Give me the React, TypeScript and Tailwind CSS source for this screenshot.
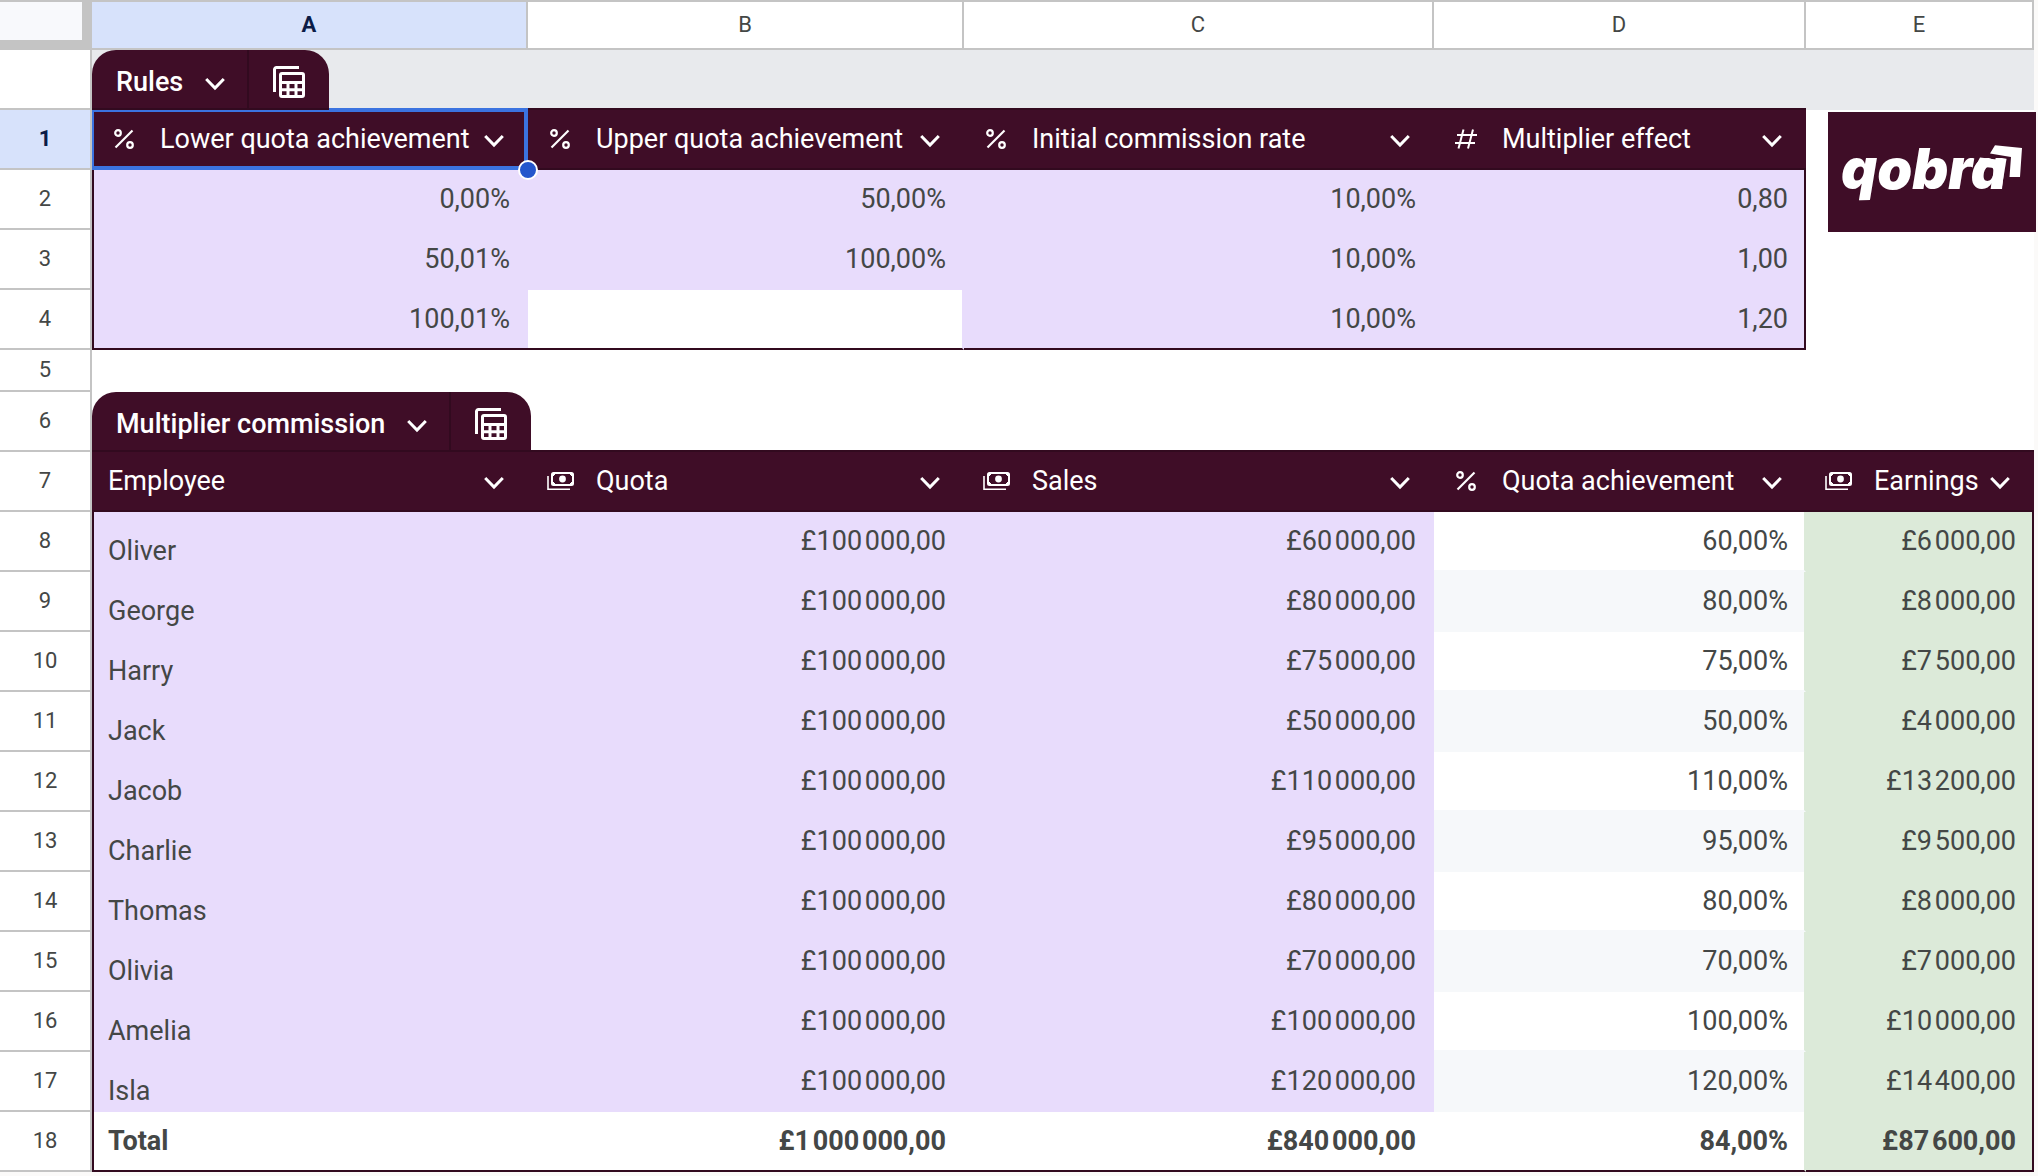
import React from "react";

const rules = [
  ["0,00%", "50,00%", "10,00%", "0,80"],
  ["50,01%", "100,00%", "10,00%", "1,00"],
  ["100,01%", "", "10,00%", "1,20"],
];

const employees = [
  ["Oliver", "£100 000,00", "£60 000,00", "60,00%", "£6 000,00"],
  ["George", "£100 000,00", "£80 000,00", "80,00%", "£8 000,00"],
  ["Harry", "£100 000,00", "£75 000,00", "75,00%", "£7 500,00"],
  ["Jack", "£100 000,00", "£50 000,00", "50,00%", "£4 000,00"],
  ["Jacob", "£100 000,00", "£110 000,00", "110,00%", "£13 200,00"],
  ["Charlie", "£100 000,00", "£95 000,00", "95,00%", "£9 500,00"],
  ["Thomas", "£100 000,00", "£80 000,00", "80,00%", "£8 000,00"],
  ["Olivia", "£100 000,00", "£70 000,00", "70,00%", "£7 000,00"],
  ["Amelia", "£100 000,00", "£100 000,00", "100,00%", "£10 000,00"],
  ["Isla", "£100 000,00", "£120 000,00", "120,00%", "£14 400,00"],
];

// Thousands are grouped with a hair space.
const money = (text: string) => text.replace(/ /g, "\u200a");

function Chevron() {
  return (
    <svg width="20" height="14" viewBox="0 0 20 14" fill="none" stroke="currentColor" strokeWidth="3" aria-hidden="true">
      <path d="M1.2 2l8.8 9 8.8-9" />
    </svg>
  );
}

function TableIcon() {
  return (
    <svg width="32" height="32" viewBox="0 0 32 32" fill="none" stroke="currentColor" aria-hidden="true">
      <path d="M1.5 26V3.5a2 2 0 0 1 2-2H26" strokeWidth="3" />
      <rect x="7.5" y="7.5" width="23" height="23" rx="1.5" strokeWidth="3" />
      <path d="M7 16.5h24M7 23.8h24M15 16v15M23 16v15" strokeWidth="3" />
    </svg>
  );
}

function PercentIcon() {
  return (
    <svg width="20" height="20" viewBox="0 0 20 20" fill="none" stroke="currentColor" strokeWidth="2.2" aria-hidden="true">
      <path d="M1.5 18.5L18.5 1.5" />
      <circle cx="4" cy="4" r="2.8" />
      <circle cx="16" cy="16" r="2.8" />
    </svg>
  );
}

function HashIcon() {
  return (
    <svg width="22" height="20" viewBox="0 0 22 20" fill="none" stroke="currentColor" strokeWidth="2" aria-hidden="true">
      <path d="M8.5 0.5L3.5 19.5M18 0.5L13 19.5M2 6h20M0 14h20" />
    </svg>
  );
}

function MoneyIcon() {
  return (
    <svg width="27" height="19" viewBox="0 0 27 19" fill="none" stroke="currentColor" strokeWidth="2" aria-hidden="true">
      <rect x="5" y="1" width="21" height="12" rx="1.5" />
      <circle cx="15.5" cy="7" r="3.4" fill="currentColor" stroke="none" />
      <path d="M6 4V2h2M23 2h2v2M6 10v2h2M23 12h2v-2" />
      <path d="M1 4v13.2h22" strokeWidth="1.6" />
    </svg>
  );
}

const icons = { percent: PercentIcon, hash: HashIcon, money: MoneyIcon };

function ColumnHeading({ label, icon }: { label: string; icon?: keyof typeof icons }) {
  const Icon = icon ? icons[icon] : null;
  return (
    <div className="flex h-full items-center pr-5.5 pl-3.5">
      {Icon && (
        <span className="mr-4 flex w-9 justify-center">
          <Icon />
        </span>
      )}
      <span className="flex-1 pl-0.5 text-left whitespace-nowrap">{label}</span>
      <button type="button" aria-label={`${label} options`} className="flex w-6 justify-center pt-1">
        <Chevron />
      </button>
    </div>
  );
}

function TableTab({ name }: { name: string }) {
  return (
    <div className="relative z-20 -mb-0.5 flex h-15 w-max overflow-hidden rounded-t-3xl border-b-2 border-[#320a1f] bg-[#3f0d27] font-medium text-white">
      <button type="button" className="flex items-center gap-5.5 border-r-2 border-[#320a1f] pt-1.5 pr-5.5 pl-6">
        {name}
        <span className="pt-1">
          <Chevron />
        </span>
      </button>
      <button type="button" aria-label={`${name} table views`} className="flex w-20 items-center justify-center pt-1.5">
        <TableIcon />
      </button>
    </div>
  );
}

function RowNumber({ n, selected = false }: { n?: number; selected?: boolean }) {
  return (
    <th
      scope="row"
      className={`border-r-2 border-b-2 border-[#c4c4c4] text-center text-[22px] ${
        selected ? "bg-[#d7e2fb] font-bold text-[#0b1c46]" : "bg-white font-normal text-[#444746]"
      }`}
    >
      {n}
    </th>
  );
}

function QobraLogo() {
  return (
    <div className="absolute top-0.5 left-5.5 z-10 h-30 w-52 bg-[#3f0d27] text-white" role="img" aria-label="qobra">
      <svg width="208" height="120" viewBox="0 0 208 120" fill="currentColor" aria-hidden="true">
        <text
          x="13"
          y="77"
          fontFamily="Inter, sans-serif"
          fontWeight="900"
          fontStyle="italic"
          fontSize="56"
        >
          qobra
        </text>
        <path d="M152 45.500L177 48.500 174 77H163L166 56 147.500 54z" />
        <path d="M167 33.300L194 36 192 65H181.500L183 45 162 41.500z" stroke="#3f0d27" strokeWidth="5" paintOrder="stroke" />
      </svg>
    </div>
  );
}

const columns = ["A", "B", "C", "D", "E"];
const head = "h-15 border-b-2 border-[#320a1f] bg-[#3f0d27] p-0 font-normal text-white";
const num = "py-0 text-right";

export default function App() {
  return (
    <main className="min-h-screen bg-[#fbfaf9] pr-1 font-[Roboto,sans-serif] text-[27px] leading-8 text-[#444746]">
      <table className="w-full table-fixed border-separate border-spacing-0 bg-white">
        <colgroup>
          <col className="w-[92px]" />
          <col className="w-[436px]" />
          <col className="w-[436px]" />
          <col className="w-[470px]" />
          <col className="w-[372px]" />
          <col className="w-[228px]" />
        </colgroup>
        <thead>
          <tr className="h-[50px] text-[22px]">
            <td className="border-t-2 border-r-10 border-b-10 border-[#c4c4c4] bg-[#f8f9fc] p-0" />
            {columns.map((c) => (
              <th
                key={c}
                scope="col"
                className={`border-t-2 border-r-2 border-b-2 border-[#c4c4c4] p-0 ${
                  c === "A" ? "bg-[#d7e2fb] font-bold text-[#0b1c46]" : "bg-white font-normal"
                }`}
              >
                {c}
              </th>
            ))}
          </tr>
        </thead>
        <tbody>
          <tr className="h-15">
            <RowNumber />
            <td colSpan={4} className="border-b-2 border-[#320a1f] bg-[#e8eaed] p-0">
              <TableTab name="Rules" />
            </td>
            <td className="bg-[#e8eaed] p-0" />
          </tr>
          <tr className="h-15">
            <RowNumber n={1} selected />
            <th scope="col" className={`relative ${head}`}>
              <ColumnHeading label="Lower quota achievement" icon="percent" />
              <span className="pointer-events-none absolute -top-0.5 right-0 -bottom-0.5 left-0 z-10 border-4 border-l-2 border-[#3b73e0]" />
              <span className="absolute -right-2.5 -bottom-3 z-20 size-5 rounded-full border-2 border-white bg-[#2456cc]" />
            </th>
            <th scope="col" className={head}>
              <ColumnHeading label="Upper quota achievement" icon="percent" />
            </th>
            <th scope="col" className={head}>
              <ColumnHeading label="Initial commission rate" icon="percent" />
            </th>
            <th scope="col" className={head}>
              <ColumnHeading label="Multiplier effect" icon="hash" />
            </th>
            <td className="relative p-0">
              <QobraLogo />
            </td>
          </tr>
          {rules.map((r, i) => {
            const last = i === rules.length - 1 ? "border-b-2 border-b-[#320a1f]" : "pb-0.5";
            return (
              <tr key={i} className="h-15">
                <RowNumber n={i + 2} />
                <td className={`${num} ${last} border-l-2 border-l-[#320a1f] bg-[#e8dcfc] pr-4.5`}>{r[0]}</td>
                <td
                  className={`${num} ${last} ${
                    r[1] ? "bg-[#e8dcfc] pr-4.5" : "border-r-2 border-r-[#e8dcfc] bg-white"
                  }`}
                >
                  {r[1]}
                </td>
                <td className={`${num} ${last} bg-[#e8dcfc] pr-4.5`}>{r[2]}</td>
                <td className={`${num} ${last} border-r-2 border-r-[#320a1f] bg-[#e8dcfc] pr-4`}>{r[3]}</td>
                <td />
              </tr>
            );
          })}
          <tr className="h-[42px]">
            <RowNumber n={5} />
            <td colSpan={5} className="p-0" />
          </tr>
          <tr className="h-15">
            <RowNumber n={6} />
            <td colSpan={5} className="border-b-2 border-[#320a1f] p-0">
              <TableTab name="Multiplier commission" />
            </td>
          </tr>
          <tr className="h-15">
            <RowNumber n={7} />
            <th scope="col" className={head}>
              <ColumnHeading label="Employee" />
            </th>
            <th scope="col" className={head}>
              <ColumnHeading label="Quota" icon="money" />
            </th>
            <th scope="col" className={head}>
              <ColumnHeading label="Sales" icon="money" />
            </th>
            <th scope="col" className={head}>
              <ColumnHeading label="Quota achievement" icon="percent" />
            </th>
            <th scope="col" className={head}>
              <ColumnHeading label="Earnings" icon="money" />
            </th>
          </tr>
          {employees.map((e, i) => (
            <tr key={e[0]} className="h-15">
              <RowNumber n={i + 8} />
              <td className="border-l-2 border-[#320a1f] bg-[#e8dcfc] p-0 pt-4.5 pl-3.5">{e[0]}</td>
              <td className={`${num} bg-[#e8dcfc] pr-4.5 pb-0.5`}>{money(e[1])}</td>
              <td className={`${num} bg-[#e8dcfc] pr-4.5 pb-0.5`}>{money(e[2])}</td>
              <td
                className={`${num} border-r-2 border-r-[#dcead9] pr-4 ${
                  i % 2 ? "bg-[#f6f8fa] pb-0.5" : "border-b-2 border-b-[#f6f8fa] bg-white"
                }`}
              >
                {e[3]}
              </td>
              <td className={`${num} border-r-2 border-[#320a1f] bg-[#dcead9] pr-4 pb-0.5`}>{money(e[4])}</td>
            </tr>
          ))}
          <tr className="h-15 font-bold">
            <RowNumber n={18} />
            <td className="border-b-2 border-l-2 border-[#320a1f] p-0 pl-3.5">Total</td>
            <td className={`${num} border-b-2 border-[#320a1f] pr-4.5`}>{money("£1 000 000,00")}</td>
            <td className={`${num} border-b-2 border-[#320a1f] pr-4.5`}>{money("£840 000,00")}</td>
            <td className={`${num} border-r-2 border-b-2 border-r-[#dcead9] border-b-[#320a1f] pr-4`}>84,00%</td>
            <td className={`${num} border-r-2 border-b-2 border-[#320a1f] bg-[#dcead9] pr-4`}>{money("£87 600,00")}</td>
          </tr>
        </tbody>
      </table>
    </main>
  );
}
